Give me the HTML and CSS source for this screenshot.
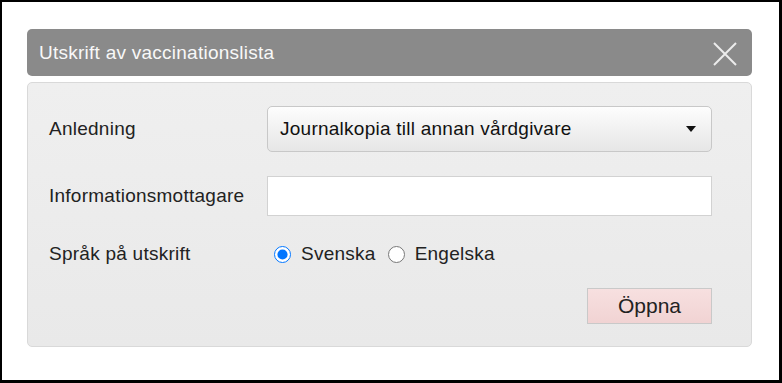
FILE: index.html
```html
<!DOCTYPE html>
<html lang="sv">
<head>
    <meta charset="UTF-8">
    <title>Utskrift av vaccinationslista</title>
    <link rel="stylesheet" href="styles.css">
</head>
<body>

<div class="dialog">
    <div class="dialog-title">
        <span>Utskrift av vaccinationslista</span>
        <button class="close" aria-label="Stäng">
            <svg width="24" height="24" viewBox="0 0 24 24">
                <path d="M1 1 L23 23 M23 1 L1 23" stroke="#ececec" stroke-width="2" fill="none"/>
            </svg>
        </button>
    </div>
    <div class="dialog-body">
        <div class="form-row">
            <label>Anledning</label>
            <div class="select">
                <span>Journalkopia till annan vårdgivare</span>
                <svg width="10" height="6" viewBox="0 0 10 6"><path d="M0 0 H10 L5 6 Z" fill="#111"/></svg>
            </div>
        </div>
        <div class="form-row">
            <label for="mottagare">Informationsmottagare</label>
            <input type="text" id="mottagare" class="text-input">
        </div>
        <div class="form-row radio-row">
            <label>Språk på utskrift</label>
            <div class="radios">
                <label class="radio"><input type="radio" name="sprak" checked> Svenska</label>
                <label class="radio"><input type="radio" name="sprak"> Engelska</label>
            </div>
        </div>
        <div class="actions">
            <button class="button">Öppna</button>
        </div>
    </div>
</div>

</body>
</html>
```

FILE: styles.css
```css
html {
    height: 100%;
}
body {
    margin: 0;
    height: 100%;
    box-sizing: border-box;
    border-style: solid;
    border-color: #000;
    border-width: 2px 3px 3px 2px;
    background-color: #fff;
    font-family: "Liberation Sans", Arial, sans-serif;
    font-size: 19px;
    letter-spacing: 0.25px;
    color: #222;
}
.dialog {
    margin: 27px 27px 0 25px;
}
.dialog-title {
    display: flex;
    align-items: center;
    justify-content: space-between;
    height: 47px;
    padding: 0 15px 0 12px;
    background-color: #8a8a8a;
    border-radius: 5px;
    color: #f8f8f8;
}
.close {
    display: flex;
    padding: 0;
    border: none;
    background: none;
    margin-top: 2px;
}
.dialog-body {
    margin-top: 6px;
    padding: 23px 39px 22px 21px;
    background: linear-gradient(#efefef, #e9e9e9);
    border: 1px solid #d9d9d9;
    border-radius: 5px;
}
.form-row {
    display: flex;
    align-items: center;
    margin-bottom: 24px;
}
.form-row > label {
    width: 218px;
    flex-shrink: 0;
}
.select {
    flex: 1;
    height: 46px;
    box-sizing: border-box;
    display: flex;
    align-items: center;
    justify-content: space-between;
    padding: 0 15px 0 12px;
    border: 1px solid #c8c8c8;
    border-radius: 5px;
    background: linear-gradient(#fdfdfd, #e6e6e6);
    color: #111;
}
.text-input {
    flex: 1;
    height: 40px;
    box-sizing: border-box;
    margin: 0;
    border: 1px solid #d2d2d2;
    background: #fff;
    font: inherit;
}
.radio-row {
    height: 28px;
    margin-bottom: 20px;
}
.radios {
    display: flex;
    gap: 12px;
    padding-left: 7px;
}
.radio {
    display: flex;
    align-items: center;
    gap: 10px;
}
.radio input {
    width: 17px;
    height: 17px;
    margin: 0;
}
.actions {
    display: flex;
    justify-content: flex-end;
}
.button {
    width: 125px;
    height: 36px;
    padding: 0;
    border: 1px solid #c9c9c9;
    background: linear-gradient(#f7e0e0, #f1d3d3);
    font-family: inherit;
    font-size: 21px;
    letter-spacing: 0;
    color: #222;
}
```
